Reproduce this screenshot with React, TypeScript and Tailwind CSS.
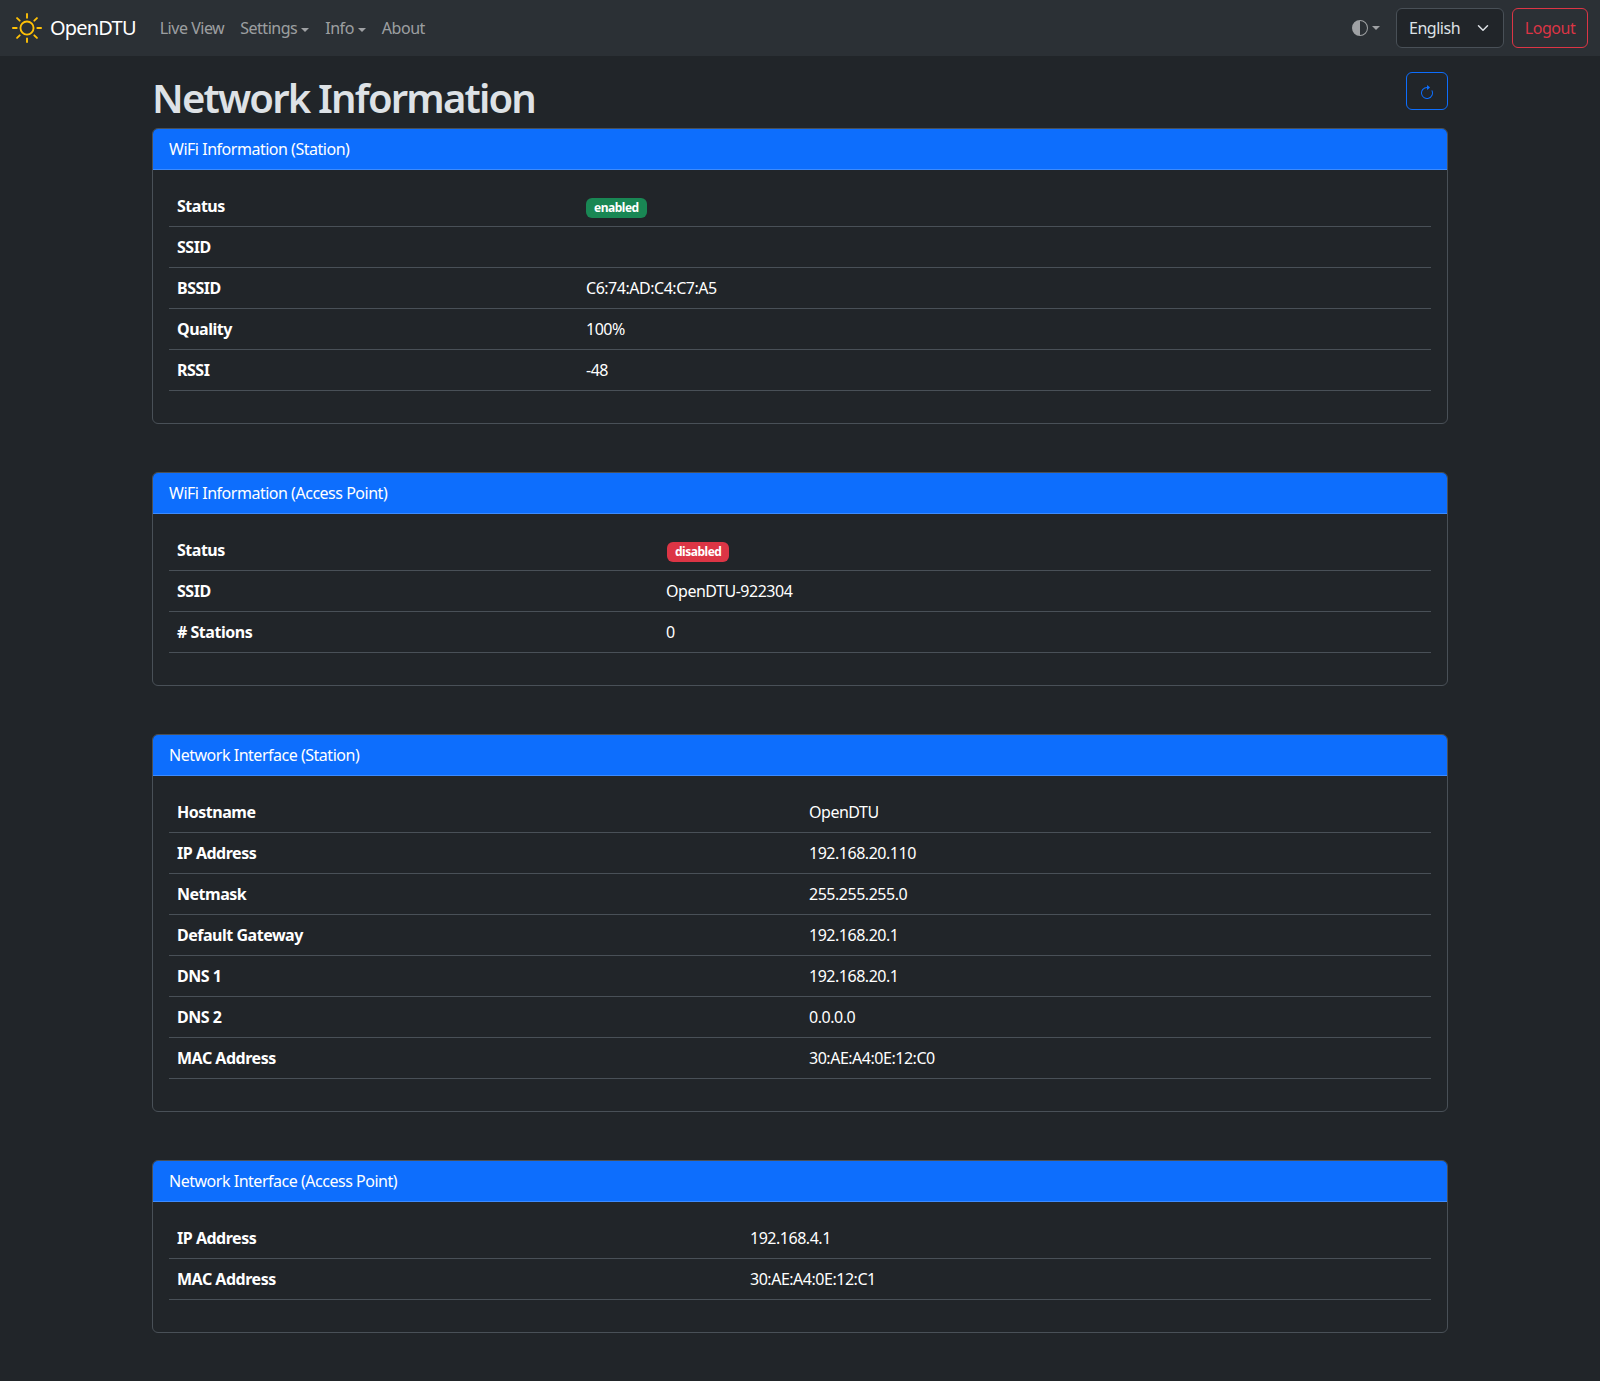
import { BsArrowClockwise, BsCircleHalf, BsSun } from 'react-icons/bs'

interface Row {
  label: string
  value?: string
  badge?: 'enabled' | 'disabled'
}

interface InfoCardProps {
  title: string
  firstCol: string
  rows: Row[]
  className?: string
}

const wifiStation: Row[] = [
  { label: 'Status', badge: 'enabled' },
  { label: 'SSID' },
  { label: 'BSSID', value: 'C6:74:AD:C4:C7:A5' },
  { label: 'Quality', value: '100%' },
  { label: 'RSSI', value: '-48' },
]

const wifiAp: Row[] = [
  { label: 'Status', badge: 'disabled' },
  { label: 'SSID', value: 'OpenDTU-922304' },
  { label: '# Stations', value: '0' },
]

const netStation: Row[] = [
  { label: 'Hostname', value: 'OpenDTU' },
  { label: 'IP Address', value: '192.168.20.110' },
  { label: 'Netmask', value: '255.255.255.0' },
  { label: 'Default Gateway', value: '192.168.20.1' },
  { label: 'DNS 1', value: '192.168.20.1' },
  { label: 'DNS 2', value: '0.0.0.0' },
  { label: 'MAC Address', value: '30:AE:A4:0E:12:C0' },
]

const netAp: Row[] = [
  { label: 'IP Address', value: '192.168.4.1' },
  { label: 'MAC Address', value: '30:AE:A4:0E:12:C1' },
]

function Caret() {
  return <span className="ml-[4px] inline-block border-x-[4.8px] border-t-[4.8px] border-x-transparent border-t-current align-[2px]" />
}

function NavBar() {
  return (
    <nav className="flex h-[56px] items-center bg-[#2b3035] px-[12px]">
      <a className="flex items-center text-[20px] tracking-[-0.04em] text-white">
        <BsSun className="mr-[8px] text-[30px] text-[#ffc107]" />
        OpenDTU
      </a>
      <ul className="ml-[16px] flex items-center text-[rgba(255,255,255,0.55)]">
        <li className="px-[8px]">Live View</li>
        <li className="px-[8px]">Settings<Caret /></li>
        <li className="px-[8px]">Info<Caret /></li>
        <li className="px-[8px]">About</li>
      </ul>
      <div className="ml-auto flex items-center">
        <span className="flex items-center px-[8px] text-[rgba(255,255,255,0.55)]">
          <BsCircleHalf className="text-[16px]" />
          <Caret />
        </span>
        <div className="ml-[8px] flex h-[40px] w-[108px] items-center justify-between rounded-[6px] border border-[#495057] bg-[#212529] pl-[12px] pr-[14px] text-[#dee2e6]">
          English
          <svg viewBox="0 0 16 16" className="h-[12px] w-[12px]" fill="none" stroke="#dee2e6" strokeWidth="2" strokeLinecap="round" strokeLinejoin="round">
            <path d="m2 5 6 6 6-6" />
          </svg>
        </div>
        <button className="ml-[8px] h-[40px] w-[76px] rounded-[6px] border border-[#dc3545] text-[#dc3545]">Logout</button>
      </div>
    </nav>
  )
}

function InfoCard({ title, firstCol, rows, className }: InfoCardProps) {
  return (
    <section className={`rounded-[6px] border border-[#495057] ${className ?? ''}`}>
      <h2 className="rounded-t-[5px] border-b border-[#3d8bfd] bg-[#0d6efd] px-[16px] py-[8px] text-white">{title}</h2>
      <div className="p-[16px]">
        <table className="mb-[16px] w-full table-fixed border-collapse text-[#dee2e6]">
          <tbody>
            {rows.map((row) => (
              <tr key={row.label} className="border-b border-[#495057]">
                <th className={`p-[8px] text-left font-bold text-white ${firstCol}`}>{row.label}</th>
                <td className="p-[8px] text-white">
                  {row.badge === 'enabled' && (
                    <span className="inline-block rounded-[6px] bg-[#198754] px-[8px] py-[4px] align-baseline text-[12px] leading-none font-bold text-white">enabled</span>
                  )}
                  {row.badge === 'disabled' && (
                    <span className="ml-px inline-block rounded-[6px] bg-[#dc3545] px-[8px] py-[4px] align-baseline text-[12px] leading-none font-bold text-white">disabled</span>
                  )}
                  {row.value}
                </td>
              </tr>
            ))}
          </tbody>
        </table>
      </div>
    </section>
  )
}

export default function App() {
  return (
    <div className="min-h-[1381px] bg-[#212529] font-['Noto_Sans','Open_Sans',sans-serif] text-[16px] leading-[24px] tracking-[-0.03em] text-[#dee2e6]">
      <NavBar />
      <main className="mx-auto w-[1296px] pt-[16px]">
        <div className="mb-[8px] flex items-start justify-between">
          <h1 className="h-[48px] pt-[2px] text-[40px] leading-[48px] font-semibold tracking-[-0.045em]">Network Information</h1>
          <button className="flex h-[38px] w-[42px] items-center justify-center rounded-[6px] border border-[#0d6efd] text-[#0d6efd]">
            <BsArrowClockwise className="mt-[3px] text-[16px]" />
          </button>
        </div>
        <InfoCard title="WiFi Information (Station)" firstCol="w-[409px]" rows={wifiStation} />
        <InfoCard title="WiFi Information (Access Point)" firstCol="w-[489px]" rows={wifiAp} className="mt-[48px]" />
        <InfoCard title="Network Interface (Station)" firstCol="w-[632px]" rows={netStation} className="mt-[48px]" />
        <InfoCard title="Network Interface (Access Point)" firstCol="w-[573px]" rows={netAp} className="mt-[48px]" />
      </main>
    </div>
  )
}
